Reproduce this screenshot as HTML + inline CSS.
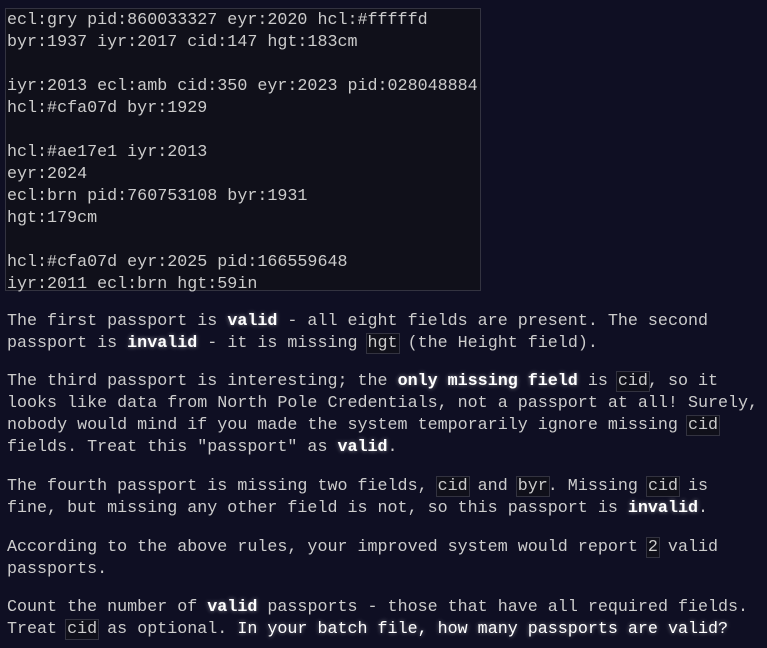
<!DOCTYPE html>
<html><head><meta charset="utf-8"><style>
html,body{margin:0;padding:0;background:#0f0f23;width:767px;height:648px;overflow:hidden}
body{font-family:"Liberation Mono",monospace;font-size:16.7px;color:#cccccc;position:relative}
.pre{position:absolute;left:5px;top:8px;width:474px;height:281px;border:1px solid #333340;background:#10101a}
.pre div{position:absolute;left:1px;top:1px;white-space:pre;line-height:22px}
p{position:absolute;left:7px;margin:0;white-space:pre;line-height:22px}
em{font-style:normal;color:#fff;font-weight:bold;text-shadow:0 0 4px rgba(255,255,255,.5)}
em.q{font-weight:normal}
code{font-family:inherit;border:1px solid #333340;background:#10101a;padding:0 1px;margin:0 -2px;position:relative}
</style></head><body>
<div class="pre"><div>ecl:gry pid:860033327 eyr:2020 hcl:#fffffd
byr:1937 iyr:2017 cid:147 hgt:183cm

iyr:2013 ecl:amb cid:350 eyr:2023 pid:028048884
hcl:#cfa07d byr:1929

hcl:#ae17e1 iyr:2013
eyr:2024
ecl:brn pid:760753108 byr:1931
hgt:179cm

hcl:#cfa07d eyr:2025 pid:166559648
iyr:2011 ecl:brn hgt:59in</div></div>
<p style="top:311px">The first passport is <em>valid</em> - all eight fields are present. The second
passport is <em>invalid</em> - it is missing <code>hgt</code> (the Height field).</p>
<p style="top:371px">The third passport is interesting; the <em>only missing field</em> is <code>cid</code>, so it
looks like data from North Pole Credentials, not a passport at all! Surely,
nobody would mind if you made the system temporarily ignore missing <code>cid</code>
fields. Treat this "passport" as <em>valid</em>.</p>
<p style="top:476px">The fourth passport is missing two fields, <code>cid</code> and <code>byr</code>. Missing <code>cid</code> is
fine, but missing any other field is not, so this passport is <em>invalid</em>.</p>
<p style="top:537px">According to the above rules, your improved system would report <code>2</code> valid
passports.</p>
<p style="top:597px">Count the number of <em>valid</em> passports - those that have all required fields.
Treat <code>cid</code> as optional. <em class="q">In your batch file, how many passports are valid?</em></p>
</body></html>
